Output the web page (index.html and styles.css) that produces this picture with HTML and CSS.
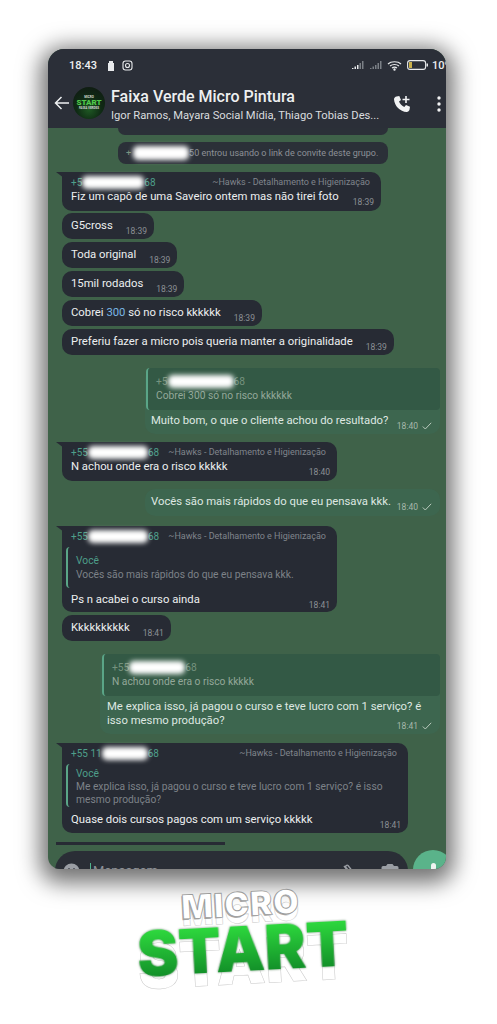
FILE: index.html
```html
<!DOCTYPE html>
<html>
<head>
    <title>Faixa Verde Micro Pintura</title>
    <meta name="viewport" content="width=device-width, initial-scale=1">
    <link rel="stylesheet" href="styles.css">
</head>
<body>
    <div class="phone">
        <div class="topbar">
            <div class="status">
                <span class="clock">18:43</span>
                <svg class="st-icon" width="8" height="11" viewBox="0 0 8 11"><path d="M1 3 h1 V1 h4 v2 h1 v8 H1z" fill="#e8eaec"/></svg>
                <svg class="st-icon" width="11" height="11" viewBox="0 0 11 11" fill="none" stroke="#e8eaec" stroke-width="1.1"><rect x="1" y="1" width="9" height="9" rx="2.5"/><circle cx="5.5" cy="5.5" r="2"/></svg>
                <span class="status-right">
                    <svg width="15" height="10" viewBox="0 0 15 10"><path d="M1 9h1.500V8H1zM3.500 9H5V6.500H3.500zM6 9h1.500V5H6z" fill="#e8eaec"/><path d="M8.500 9H10V3H8.500zM11 9h1.500V1H11z" fill="#7b8086"/></svg>
                    <svg width="15" height="10" viewBox="0 0 15 10"><path d="M1 9h1.500V8H1zM3.500 9H5V6.500H3.500zM6 9h1.500V5H6zM8.500 9H10V3H8.500zM11 9h1.500V1H11z" fill="#7b8086"/></svg>
                    <svg width="15" height="11" viewBox="0 0 15 11" fill="none" stroke="#e8eaec" stroke-width="1.2"><path d="M1 4 C4 1 11 1 14 4M3 6 C5.500 4 9.500 4 12 6M5 8 C6.500 7 8.500 7 10 8"/><circle cx="7.500" cy="9.500" r=".6" fill="#e8eaec"/></svg>
                    <svg class="battery" width="21" height="10" viewBox="0 0 21 10"><rect x=".6" y=".6" width="18" height="8.800" rx="2.500" fill="none" stroke="#e8eaec" stroke-width="1.100"/><rect x="2" y="2" width="3" height="6" fill="#c9b04a"/><rect x="19.500" y="3.500" width="1.500" height="3" fill="#e8eaec"/></svg>
                    <span class="pct">10%</span>
                </span>
            </div>
            <div class="header">
                <svg class="back" width="16" height="14" viewBox="0 0 16 14" fill="none" stroke="#eef0f1" stroke-width="1.500"><path d="M15 7H1.500M7.500 1 1.500 7l6 6"/></svg>
                <div class="avatar">
                    <span class="av-small">MICRO</span>
                    <span class="av-big">START</span>
                    <span class="av-small">FAIXA VERDES</span>
                </div>
                <div class="group">
                    <div class="group-name">Faixa Verde Micro Pintura</div>
                    <div class="group-members">Igor Ramos, Mayara Social Mídia, Thiago Tobias Des...</div>
                </div>
                <svg class="call" width="18" height="18" viewBox="0 0 18 18"><path d="M3.500 1.500 6.300 1 8 5 6 6.500C7 8.800 9 10.800 11.300 12L13 10l4 1.800-.5 3C16.300 16 15 17 13.800 17 7 16.500 1.500 11 1 4.200 1 3 2.300 1.700 3.500 1.500z" fill="#f2f3f4"/><path d="M13 1v7M9.500 4.500h7" stroke="#f2f3f4" stroke-width="1.600"/></svg>
                <svg class="menu" width="4" height="16" viewBox="0 0 4 16"><circle cx="2" cy="2" r="1.700" fill="#f2f3f4"/><circle cx="2" cy="8" r="1.700" fill="#f2f3f4"/><circle cx="2" cy="14" r="1.700" fill="#f2f3f4"/></svg>
            </div>
        </div>

        <div class="chat">
            <div class="sys sys-cut"></div>
            <div class="sys"><span class="dim">+</span><span class="blot sys-blot"></span><span>50 entrou usando o link de convite deste grupo.</span></div>

            <div class="msg in first first-wide">
                <div class="who"><span class="num">+5<span class="blot blot-a"></span>68</span><span class="hawks">~Hawks - Detalhamento e Higienização</span></div>
                <div class="row"><span class="txt">Fiz um capô de uma Saveiro ontem mas não tirei foto</span><span class="time">18:39</span></div>
            </div>
            <div class="msg in"><div class="row"><span class="txt">G5cross</span><span class="time">18:39</span></div></div>
            <div class="msg in"><div class="row"><span class="txt">Toda original</span><span class="time">18:39</span></div></div>
            <div class="msg in"><div class="row"><span class="txt">15mil rodados</span><span class="time">18:39</span></div></div>
            <div class="msg in"><div class="row"><span class="txt">Cobrei <span class="link">300</span> só no risco kkkkkk</span><span class="time">18:39</span></div></div>
            <div class="msg in"><div class="row"><span class="txt">Preferiu fazer a micro pois queria manter a originalidade</span><span class="time">18:39</span></div></div>

            <div class="msg out out-a">
                <div class="quote">
                    <div class="q-name dim">+5<span class="blot blot-b"></span>68</div>
                    <div class="q-text">Cobrei 300 só no risco kkkkkk</div>
                </div>
                <div class="row"><span class="txt">Muito bom, o que o cliente achou do resultado?</span><span class="time">18:40</span><svg class="tick" width="10" height="8" viewBox="0 0 10 8" fill="none" stroke="#b9c9bd" stroke-width="1"><path d="M.8 4.500 3.300 7 9.200 .8"/></svg></div>
            </div>

            <div class="msg in first in-b">
                <div class="who"><span class="num">+55<span class="blot blot-c"></span>68</span><span class="hawks">~Hawks - Detalhamento e Higienização</span></div>
                <div class="row"><span class="txt">N achou onde era o risco kkkkk</span><span class="time">18:40</span></div>
            </div>

            <div class="msg out out-b">
                <div class="row"><span class="txt">Vocês são mais rápidos do que eu pensava kkk.</span><span class="time">18:40</span><svg class="tick" width="10" height="8" viewBox="0 0 10 8" fill="none" stroke="#b9c9bd" stroke-width="1"><path d="M.8 4.500 3.300 7 9.200 .8"/></svg></div>
            </div>

            <div class="msg in first in-c">
                <div class="who"><span class="num">+55<span class="blot blot-c"></span>68</span><span class="hawks">~Hawks - Detalhamento e Higienização</span></div>
                <div class="quote in-quote">
                    <div class="q-name green">Você</div>
                    <div class="q-text">Vocês são mais rápidos do que eu pensava kkk.</div>
                </div>
                <div class="row"><span class="txt">Ps n acabei o curso ainda</span><span class="time">18:41</span></div>
            </div>
            <div class="msg in"><div class="row"><span class="txt">Kkkkkkkkkk</span><span class="time">18:41</span></div></div>

            <div class="msg out out-c">
                <div class="quote">
                    <div class="q-name dim">+55<span class="blot blot-d"></span>68</div>
                    <div class="q-text">N achou onde era o risco kkkkk</div>
                </div>
                <div class="txt wrap">Me explica isso, já pagou o curso e teve lucro com 1 serviço? é isso mesmo produção?<span class="stamp"><span class="time">18:41</span><svg class="tick" width="10" height="8" viewBox="0 0 10 8" fill="none" stroke="#b9c9bd" stroke-width="1"><path d="M.8 4.500 3.300 7 9.200 .8"/></svg></span></div>
            </div>

            <div class="msg in first in-d">
                <div class="who"><span class="num">+55 11<span class="blot blot-e"></span>68</span><span class="hawks">~Hawks - Detalhamento e Higienização</span></div>
                <div class="quote in-quote">
                    <div class="q-name green">Você</div>
                    <div class="q-text">Me explica isso, já pagou o curso e teve lucro com 1 serviço? é isso mesmo produção?</div>
                </div>
                <div class="row"><span class="txt">Quase dois cursos pagos com um serviço kkkkk</span><span class="time">18:41</span></div>
            </div>
            <div class="cut-bubble"></div>
        </div>

        <div class="composer">
            <div class="input">
                <svg width="17" height="17" viewBox="0 0 17 17"><circle cx="8.500" cy="8.500" r="8" fill="#9a9ea4"/><circle cx="6" cy="6.500" r="1.200" fill="#2a2e36"/><circle cx="11" cy="6.500" r="1.200" fill="#2a2e36"/></svg>
                <span class="placeholder">Mensagem</span>
                <svg class="clip" width="16" height="17" viewBox="0 0 16 17" fill="none" stroke="#9a9ea4" stroke-width="1.400"><path d="M2 3l9 11c2 2 4 0 2.500-2L6 2.500C5 1.500 3 3 4 4.500l7 8.500"/></svg>
                <svg class="cam" width="18" height="16" viewBox="0 0 18 16"><path d="M2 3h3l1.500-2h5L13 3h3a1.500 1.500 0 0 1 1.500 1.500V16H.5V4.500A1.500 1.500 0 0 1 2 3z" fill="#9a9ea4"/><circle cx="9" cy="9" r="3" fill="#2a2e36"/></svg>
            </div>
            <div class="mic"><span class="mic-bar"></span></div>
        </div>
    </div>

    <div class="logo">
        <div class="logo-micro">MICRO</div>
        <div class="logo-start"><span class="start-fill">START</span></div>
    </div>
</body>
</html>
```

FILE: styles.css
```css
html, body {
    margin: 0;
    height: 1024px;
    overflow: hidden;
}
body {
    font-family: Roboto, "Liberation Sans", sans-serif;
    background-color: #ffffff;
    padding: 49px 51px 0 48px;
    box-sizing: border-box;
}
.phone {
    position: relative;
    width: 398px;
    height: 820px;
    background-color: #3f6249;
    border-radius: 16px 16px 12px 12px;
    overflow: hidden;
    display: flex;
    flex-direction: column;
    box-shadow: 0 6px 22px 8px rgba(0, 0, 0, 0.55);
}
.topbar {
    background-color: #2b2f38;
    height: 79px;
    flex: none;
    color: #eef0f1;
}
.status {
    display: flex;
    align-items: center;
    gap: 6px;
    padding: 10px 0 0 21px;
    height: 12px;
    font-size: 11px;
    font-weight: 500;
}
.st-icon {
    margin-left: 1px;
}
.clock {
    margin-right: 3px;
}
.status-right {
    margin-left: auto;
    display: flex;
    align-items: center;
    gap: 3px;
    width: 95px;
    overflow: hidden;
    white-space: nowrap;
}
.status-right > * {
    flex: none;
}
.battery {
    margin-left: 2px;
}
.pct {
    margin-left: 1px;
}
.header {
    display: flex;
    align-items: flex-start;
    padding: 16px 0 0 6px;
}
.back {
    flex: none;
    margin-top: 9px;
}
.avatar {
    width: 32px;
    height: 32px;
    flex: none;
    margin-left: 3px;
    border-radius: 50%;
    background: radial-gradient(circle at 50% 70%, #1f5a24 0, #0f2a14 45%, #101612 100%);
    display: flex;
    flex-direction: column;
    align-items: center;
    justify-content: center;
    line-height: 1;
    color: #d8ded8;
}
.av-small {
    font-size: 3px;
    font-weight: 700;
}
.av-big {
    font-size: 8px;
    font-weight: 900;
    color: #4fc94a;
}
.group {
    flex: none;
    width: 276px;
    margin-left: 6px;
}
.group-name {
    font-size: 16px;
    font-weight: 500;
    line-height: 19px;
}
.group-members {
    font-size: 11.200px;
    line-height: 15px;
    margin-top: 2px;
    color: #d9dcdf;
    white-space: nowrap;
}
.call {
    margin: 8px 0 0 6px;
    flex: none;
}
.menu {
    margin: 9px 0 0 26px;
    flex: none;
}

.chat {
    flex: 1;
    min-height: 0;
    padding-left: 14px;
    overflow: hidden;
}
.sys {
    width: 270px;
    height: 22px;
    margin: 7px 0 8px 56px;
    box-sizing: border-box;
    padding-left: 8px;
    display: flex;
    align-items: center;
    background-color: #2b3038;
    border-radius: 8px;
    font-size: 9px;
    color: #8d9197;
    white-space: nowrap;
}
.sys-cut {
    height: 7px;
    margin-top: 0;
    margin-bottom: 0;
    border-radius: 0 0 8px 8px;
}
.msg {
    background-color: #272b34;
    border-radius: 10px;
    box-sizing: border-box;
    margin-bottom: 3px;
    width: max-content;
    position: relative;
}
.in {
    padding: 5px 7px 0 9px;
    height: 26px;
}
.in.first::before {
    content: "";
    position: absolute;
    left: -6px;
    top: 0;
    border-top: 6px solid #272b34;
    border-left: 8px solid transparent;
}
.first {
    height: auto;
    border-top-left-radius: 0;
}
.first-wide {
    width: 319px;
    height: 39px;
    padding-top: 3px;
    margin-bottom: 2px;
}
.row {
    display: flex;
    align-items: flex-end;
}
.txt {
    font-size: 11.300px;
    line-height: 15px;
    color: #edeff0;
    white-space: nowrap;
}
.time {
    font-size: 8.500px;
    line-height: 10px;
    color: #8b9095;
    margin-left: 13px;
    position: relative;
    top: 3px;
}
.link {
    color: #7ab8e6;
}
.who {
    display: flex;
    justify-content: space-between;
    align-items: center;
    height: 14px;
    font-size: 9px;
}
.num {
    color: #4e9f8a;
    font-size: 10px;
    white-space: nowrap;
}
.hawks {
    color: #80858c;
    padding-right: 4px;
    white-space: nowrap;
}
.blot {
    display: inline-block;
    height: 13px;
    vertical-align: -3px;
    background-color: #ffffff;
    border-radius: 5px;
    filter: blur(2.500px);
}
.sys-blot {
    width: 56px;
    height: 14px;
    margin: 0 0 0 2px;
}
.blot-a {
    width: 62px;
}
.blot-b {
    width: 66px;
}
.blot-c {
    width: 60px;
}
.blot-d {
    width: 56px;
}
.blot-e {
    width: 46px;
}
.dim {
    color: #76937f;
}
.green {
    color: #4e9f8a;
}

.out {
    background-color: rgba(60, 105, 83, 0.55);
    margin-left: auto;
    margin-right: 6px;
    color: #e6ece7;
}
.out .tick {
    margin: 0 8px -2px 4px;
    flex: none;
}
.out .txt {
    color: #dfe8e2;
}
.out .time {
    color: #a6b8ab;
    margin-left: auto;
}
.out-a {
    width: 295px;
    height: 66px;
    margin-top: 13px;
    margin-bottom: 8px;
}
.out-a .row,
.out-b .row {
    padding: 0 0 0 6px;
}
.out-a .row {
    padding-top: 3px;
}
.out-b {
    width: 295px;
    height: 27px;
    margin-top: 8px;
    margin-bottom: 10px;
}
.out-b .row {
    padding-top: 5px;
}
.out-c {
    width: 340px;
    height: 80px;
    margin-top: 13px;
    margin-bottom: 9px;
}
.out-c .wrap {
    white-space: normal;
    padding: 4px 0 0 7px;
    line-height: 14px;
    color: #dfe8e2;
}
.stamp {
    float: right;
    margin-top: 7px;
    line-height: 10px;
    display: flex;
    align-items: center;
}
.out-c .stamp .time {
    top: 0;
}
.out-c .stamp .tick {
    margin-bottom: 0;
}
.quote {
    background-color: #335945;
    border-left: 2px solid #5aa587;
    border-radius: 4px;
    padding: 7px 8px 0 8px;
    height: 42px;
    box-sizing: border-box;
    font-size: 10.250px;
    line-height: 14px;
}
.q-name {
    white-space: nowrap;
}
.q-text {
    color: #93a89a;
}
.out-a .quote {
    margin-left: 1px;
}
.out-c .quote {
    margin-left: 2px;
}
.out-a .q-text,
.out-c .q-text {
    white-space: nowrap;
}
.in-quote {
    background-color: transparent;
    margin: 4px 0 4px -5px;
    height: 41px;
}
.in-quote .q-text {
    color: #7d8288;
}
.in-b {
    width: 275px;
    height: 39px;
    margin-bottom: 0;
    padding-top: 3px;
}
.in-c {
    width: 275px;
    height: 86px;
    padding-top: 3px;
}
.in-d {
    width: 346px;
    height: 90px;
    padding-top: 3px;
    margin-bottom: 0;
}
.in-d .in-quote {
    height: 43px;
    padding-top: 3px;
    margin-bottom: 5px;
    line-height: 13px;
}
.first .time {
    margin-left: auto;
}
.cut-bubble {
    width: 169px;
    height: 3px;
    margin: 9px 0 0 -6px;
    background-color: #272b34;
}

.composer {
    position: absolute;
    left: 7px;
    right: 0;
    top: 802px;
    display: flex;
}
.input {
    width: 353px;
    height: 40px;
    background-color: #2a2e36;
    border-radius: 20px;
    display: flex;
    align-items: flex-start;
    padding: 12px 0 0 8px;
    box-sizing: border-box;
    flex: none;
}
.placeholder {
    font-size: 13px;
    line-height: 15px;
    width: 66px;
    color: #8d9197;
    margin-left: 10px;
    border-left: 1px solid #4fb58d;
    padding-left: 2px;
    flex: none;
}
.clip {
    margin-left: 183px;
}
.cam {
    margin-left: 23px;
}
.mic {
    width: 40px;
    height: 40px;
    margin-left: 5px;
    margin-top: -1px;
    background-color: #5ab38a;
    border-radius: 50%;
    flex: none;
    display: flex;
    justify-content: center;
    padding-top: 13px;
    box-sizing: border-box;
}
.mic-bar {
    width: 5px;
    height: 16px;
    background-color: #f0f4f1;
    border-radius: 3px;
}

.logo {
    margin: 19px 0 0 84px;
    width: 220px;
    text-align: center;
    transform: rotate(-3deg);
    font-family: Inter, "Liberation Sans", sans-serif;
    font-weight: 900;
    line-height: 1;
}
.logo-micro,
.logo-start {
    position: relative;
    white-space: nowrap;
}
.logo-micro {
    font-size: 33px;
    letter-spacing: 1px;
    color: #ffffff;
    -webkit-text-stroke: 0.8px #9a9a9a;
    text-shadow: -1px 1px 0 #a5a5a5;
    height: 33px;
}
.logo-start {
    font-size: 62px;
    height: 62px;
    margin-top: -3px;
}
.start-fill {
    background: linear-gradient(#36ee44, #0a7a22);
    -webkit-background-clip: text;
    background-clip: text;
    color: transparent;
    filter: drop-shadow(0 0 1px rgba(0, 60, 10, 0.6));
}
.logo-micro::after,
.logo-start::after {
    position: absolute;
    left: 0;
    right: 0;
    top: 7px;
    z-index: -1;
    color: transparent;
    text-shadow: none;
    -webkit-text-stroke: 0.5px #c8c8c8;
}
.logo-micro::after {
    content: "MICRO";
}
.logo-start::after {
    content: "START";
    top: 13px;
}
```
